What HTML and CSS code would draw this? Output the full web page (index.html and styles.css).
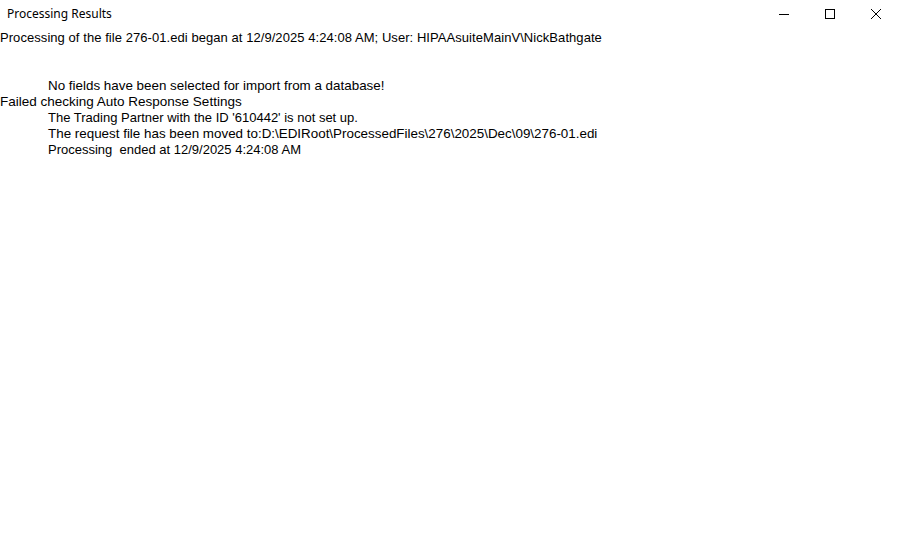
FILE: index.html
```html
<!DOCTYPE html>
<html>
<head>
<meta charset="utf-8">
<link rel="stylesheet" href="styles.css">
</head>
<body>
<div class="window">
  <div class="titlebar">
    <div class="title">Processing Results</div>
    <div class="controls">
      <div class="ctl"><svg width="10" height="10" viewBox="0 0 10 10"><line x1="0" y1="5.5" x2="10" y2="5.5" stroke="#000" stroke-width="1"/></svg></div>
      <div class="ctl"><svg width="10" height="10" viewBox="0 0 10 10"><rect x="0.5" y="0.5" width="9" height="9" fill="none" stroke="#000" stroke-width="1"/></svg></div>
      <div class="ctl"><svg width="10" height="10" viewBox="0 0 10 10"><path d="M0 0 L10 10 M10 0 L0 10" stroke="#000" stroke-width="1"/></svg></div>
    </div>
  </div>
  <div class="log">
    <div class="line head">Processing of the file 276-01.edi began at 12/9/2025 4:24:08 AM; User: HIPAAsuiteMainV\NickBathgate</div>
    <div class="line">&nbsp;</div>
    <div class="line">&nbsp;</div>
    <div class="line indent">No fields have been selected for import from a database!</div>
    <div class="line wide">Failed checking Auto Response Settings</div>
    <div class="line indent num">The Trading Partner with the ID '610442' is not set up.</div>
    <div class="line indent">The request file has been moved to:D:\EDIRoot\ProcessedFiles\276\2025\Dec\09\276-01.edi</div>
    <div class="line indent num">Processing&nbsp; ended at 12/9/2025 4:24:08 AM</div>
  </div>
</div>
</body>
</html>
```

FILE: styles.css
```css
html, body {
  margin: 0;
  padding: 0;
  background: #fff;
}
.window {
  width: 899px;
  height: 547px;
  background: #fff;
  color: #000;
}
.titlebar {
  height: 29px;
  display: flex;
  align-items: center;
  justify-content: space-between;
}
.title {
  font-family: "Segoe UI", "Noto Sans", "Liberation Sans", sans-serif;
  font-size: 12px;
  padding-left: 7px;
  padding-bottom: 2px;
}
.controls {
  display: flex;
  height: 29px;
  align-self: flex-start;
}
.ctl {
  width: 46px;
  height: 27px;
  display: flex;
  align-items: center;
  justify-content: center;
}
.log {
  font-family: "Liberation Sans", Arial, sans-serif;
  font-size: 13.4px;
  line-height: 16px;
  padding-top: 1px;
}
.line {
  white-space: pre;
}
.head {
  font-size: 13px;
  letter-spacing: 0.06px;
}
.wide {
  font-size: 13.5px;
}
.num {
  font-size: 13px;
}
.indent {
  padding-left: 48px;
}
```
